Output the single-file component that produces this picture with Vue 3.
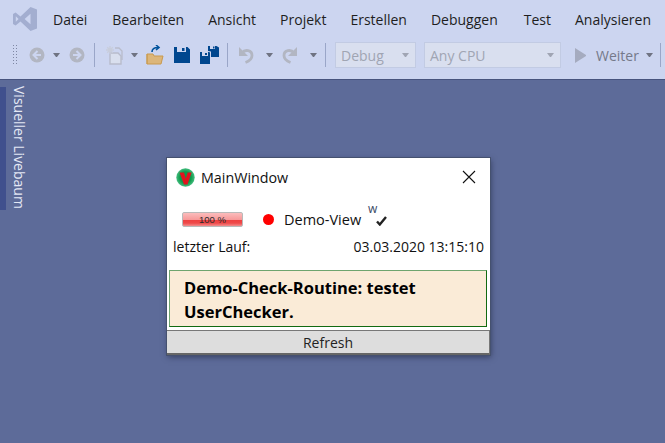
<script setup>
const menus = ['Datei', 'Bearbeiten', 'Ansicht', 'Projekt', 'Erstellen', 'Debuggen', 'Test', 'Analysieren']
</script>

<template>
  <div class="ide">
    <header class="chrome">
      <div class="menubar">
        <svg class="logo" width="24" height="24" viewBox="0 0 24 24">
          <path fill="#a3aed0" d="M17.5 0 24 2.6v18.8L17.500 24 7.500 14.600 2.600 18.400 0 17V7l2.600-1.400 4.900 3.800zM17.500 6.800 11.600 12l5.900 5.200zM2.800 9.200v5.600L5.600 12z" fill-rule="evenodd"/>
        </svg>
        <nav class="menus">
          <span v-for="m in menus" :key="m" class="menu">{{ m }}</span>
        </nav>
      </div>
      <div class="toolbar">
        <span class="grip"></span>
        <svg class="tb nav-back" width="16" height="16" viewBox="0 0 16 16"><circle cx="8" cy="8" r="7.500" fill="#b2b6c2"/><path d="M8.500 4 4.500 8l4 4M5 8h7" fill="none" stroke="#ccd5f0" stroke-width="2"/></svg>
        <span class="arrow a1"></span>
        <svg class="tb nav-fwd" width="16" height="16" viewBox="0 0 16 16"><circle cx="8" cy="8" r="7.500" fill="#b2b6c2"/><path d="M7.500 4l4 4-4 4M11 8H4" fill="none" stroke="#ccd5f0" stroke-width="2"/></svg>
        <span class="sep s1"></span>
        <svg class="tb newp" width="18" height="20" viewBox="0 0 18 20"><path d="M5 8h8l3 3v8H5z" fill="#d9dfee" stroke="#b8bccb" stroke-width="1.400"/><path d="M5 1v8M1 5h8M2.200 2.200l5.600 5.600M7.800 2.200 2.200 7.800" stroke="#c8cddb" stroke-width="1.300"/><path d="M10 3h4l3 3v9" fill="none" stroke="#b8bccb" stroke-width="1.300"/></svg>
        <span class="arrow a2"></span>
        <svg class="tb open" width="18" height="20" viewBox="0 0 18 20"><path d="M1 9h6l1 2h9l-2 8H1z" fill="#dcb67a" stroke="#c99a4e"/><path d="M1 19V9" stroke="#c99a4e"/><path d="M6 7c0-3 2-4.500 6-4.500M10 0l3 2.500-3 2.500" fill="none" stroke="#00539c" stroke-width="1.600"/></svg>
        <svg class="tb save" width="16" height="16" viewBox="0 0 16 16"><path fill-rule="evenodd" d="M0 0h3v5h9V0h1.500L16 2.500V16H0zM8 1h2.500v3H8z" fill="#00478f"/></svg>
        <svg class="tb saveall" width="19" height="18" viewBox="0 0 19 18"><path fill-rule="evenodd" d="M0 6h2v4h6V6h1.500L10 7v11H0zM5 7h2v2H5z" fill="#00478f"/><path fill-rule="evenodd" d="M8 0h2v3h5V0h1.500L19 1.500V11h-8V5.500L8 5zM13 .5h1.500v2H13z" fill="#00478f"/></svg>
        <span class="sep s2"></span>
        <svg class="tb undo" width="16" height="18" viewBox="0 0 16 18"><path d="M1 1v9h9z" fill="#b2b6c2"/><path d="M4 7c3-4 10-3 10 2.500 0 3-2.500 5.500-6.500 7" fill="none" stroke="#b2b6c2" stroke-width="2.800"/></svg>
        <span class="arrow a3"></span>
        <svg class="tb redo" width="16" height="18" viewBox="0 0 16 18"><path d="M15 1v9H6z" fill="#b2b6c2"/><path d="M12 7C9 3 2 4 2 9.500c0 3 2.500 5.500 6.500 7" fill="none" stroke="#b2b6c2" stroke-width="2.800"/></svg>
        <span class="arrow a4"></span>
        <span class="sep s3"></span>
        <div class="combo debug"><span>Debug</span><i class="arrow"></i></div>
        <div class="combo cpu"><span>Any CPU</span><i class="arrow"></i></div>
        <span class="play"></span>
        <span class="weiter">Weiter</span>
        <span class="arrow a5"></span>
        <span class="sep s4"></span>
      </div>
    </header>

    <main class="desk">
      <aside class="tab-strip"></aside>
      <div class="tab-label">Visueller Livebaum</div>

      <section class="window">
        <div class="titlebar">
          <svg width="19" height="19" viewBox="0 0 19 19" class="app-icon">
            <defs><radialGradient id="g"><stop offset="60%" stop-color="#0c9a4a"/><stop offset="100%" stop-color="#45bd80"/></radialGradient></defs>
            <circle cx="9.500" cy="9.500" r="9.200" fill="url(#g)"/>
            <path d="M3.500 4.500h4.500l1.800 6.200 1.800-6.200h4L11.500 16.500H8z" fill="#e0141e"/>
          </svg>
          <span class="title">MainWindow</span>
          <svg class="close" width="14" height="14" viewBox="0 0 14 14"><path d="M1 1l12 12M13 1 1 13" stroke="#111" stroke-width="1.100"/></svg>
        </div>
        <div class="status">
          <div class="progress"><span>100 %</span></div>
          <span class="dot"></span>
          <span class="view">Demo-View</span>
          <span class="sup">w</span>
          <svg class="check" width="11" height="10" viewBox="0 0 11 10"><path d="M1 5.500l2.800 3L10 1" fill="none" stroke="#222" stroke-width="2.400"/></svg>
        </div>
        <div class="lastrun">
          <span>letzter Lauf:</span>
          <span>03.03.2020 13:15:10</span>
        </div>
        <div class="message">Demo-Check-Routine: testet UserChecker.</div>
        <button class="refresh">Refresh</button>
      </section>
    </main>
  </div>
</template>

<style>
html, body { margin: 0; padding: 0; overflow: hidden; }
</style>

<style scoped>
.ide {
  width: 665px;
  height: 443px;
  display: flex;
  flex-direction: column;
  font-family: "Open Sans", "Noto Sans", sans-serif;
  overflow: hidden;
  background: #5d6b99;
}
.chrome {
  height: 80px;
  box-sizing: border-box;
  background: #ccd5f0;
  border-bottom: 1px solid #47547e;
  flex: none;
}
.menubar {
  height: 38px;
  display: flex;
  align-items: center;
  padding-left: 13px;
}
.logo { flex: none; }
.menus {
  display: flex;
  gap: 24px;
  margin-left: 16px;
  font-size: 14px;
  color: #1e1e1e;
  white-space: nowrap;
}
.menu:nth-child(2) { margin-left: 1px; }
.menu:nth-child(6) { margin-right: 2px; }
.toolbar {
  height: 41px;
  display: flex;
  align-items: center;
  padding-left: 12px;
  padding-bottom: 7px;
  box-sizing: border-box;
}
.tb { flex: none; }
.grip {
  width: 6px;
  height: 22px;
  flex: none;
  background-image: radial-gradient(circle, #7f88a4 0.8px, transparent 1px);
  background-size: 3px 3px;
}
.nav-back { margin-left: 11px; }
.arrow {
  display: inline-block;
  width: 1px;
  height: 0;
  border-left: 3px solid transparent;
  border-right: 3px solid transparent;
  border-top: 4px solid #6f7382;
  flex: none;
}
.a1 { margin-left: 8px; }
.nav-fwd { margin-left: 9px; }
.sep { width: 1px; height: 24px; background: #9aa6c8; flex: none; }
.s1 { margin-left: 9px; }
.newp { margin-left: 10px; }
.a2 { margin-left: 8px; }
.open { margin-left: 8px; }
.save { margin-left: 10px; }
.saveall { margin-left: 10px; }
.s2 { margin-left: 8px; }
.undo { margin-left: 10px; }
.a3 { margin-left: 12px; }
.redo { margin-left: 9px; }
.a4 { margin-left: 12px; }
.s3 { margin-left: 8px; }
.combo {
  height: 26px;
  box-sizing: border-box;
  background: #d9dfef;
  border: 1px solid #c2cbe3;
  color: #a0a5b3;
  font-size: 14px;
  display: flex;
  align-items: center;
  justify-content: space-between;
  padding: 0 4px 0 5px;
  flex: none;
}
.combo .arrow { border-top-color: #a0a5b3; margin-right: 2px; }
.debug { width: 81px; margin-left: 9px; }
.cpu { width: 137px; margin-left: 8px; }
.play {
  width: 0;
  height: 1px;
  border-left: 11px solid #a5abbf;
  border-top: 7px solid transparent;
  border-bottom: 7px solid transparent;
  margin-left: 14px;
  flex: none;
}
.weiter { margin-left: 10px; width: 44px; font-size: 14px; color: #75798a; white-space: nowrap; flex: none; }
.a5 { margin-left: 6px; }
.s4 { margin-left: 7px; }

.desk { flex: 1; position: relative; }
.tab-strip {
  position: absolute;
  left: 0;
  top: 7px;
  width: 6px;
  height: 123px;
  background: #40508d;
}
.tab-label {
  position: absolute;
  left: 11px;
  top: 6px;
  writing-mode: vertical-rl;
  font-size: 14px;
  color: #e4e8f5;
  white-space: nowrap;
  line-height: 16px;
}
.window {
  position: absolute;
  left: 167px;
  top: 78px;
  width: 323px;
  height: 197px;
  box-sizing: border-box;
  background: #fff;
  box-shadow: 0 0 0 1px #45516f, 1px 2px 6px rgba(20, 25, 50, .55);
  display: flex;
  flex-direction: column;
  color: #111;
}
.titlebar {
  height: 38px;
  flex: none;
  display: flex;
  align-items: center;
  padding: 0 14px 0 9px;
  box-sizing: border-box;
}
.title { margin-left: 6px; font-size: 14.300px; flex: 1; }
.status {
  height: 30px;
  margin-top: 8px;
  flex: none;
  display: flex;
  align-items: center;
  padding-left: 15px;
  position: relative;
  font-size: 14.500px;
}
.progress {
  width: 61px;
  height: 15px;
  box-sizing: border-box;
  border: 1px solid #b9b9b9;
  border-radius: 2px;
  background: linear-gradient(#fbbcbc 0, #f79a9a 50%, #ee3f3f 55%, #ef4a4a 78%, #f28e8e 100%);
  font-size: 9.500px;
  font-family: "Liberation Sans", sans-serif;
  text-align: center;
  line-height: 13px;
  color: #2a2a2a;
}
.dot { width: 11px; height: 11px; background: #f00; border-radius: 50%; margin-left: 20px; }
.view { margin-left: 10px; }
.sup { position: absolute; left: 201px; top: -3px; font-size: 12px; line-height: 16px; color: #3a4a66; }
.check { margin-left: 15px; margin-top: 3px; }
.lastrun {
  display: flex;
  justify-content: space-between;
  padding: 0 6px;
  font-size: 14px;
  height: 26px;
  line-height: 26px;
  flex: none;
}
.message {
  margin: 10px 3px 0 2px;
  height: 57px;
  box-sizing: border-box;
  border: 1px solid #116a11;
  border-top-color: #6ea46e;
  border-left-color: #6ea46e;
  background: #faebd7;
  padding: 5px 14px;
  font-weight: 700;
  font-size: 16.500px;
  line-height: 24px;
  color: #000;
  flex: none;
}
.refresh {
  margin-top: 3px;
  height: 25px;
  border: none;
  border-top: 1px solid #777;
  border-bottom: 2px solid #666;
  border-right: 1px solid #777;
  background: #dddddd;
  font-family: inherit;
  font-size: 14px;
  color: #222;
  padding: 0;
  flex: none;
}
</style>
